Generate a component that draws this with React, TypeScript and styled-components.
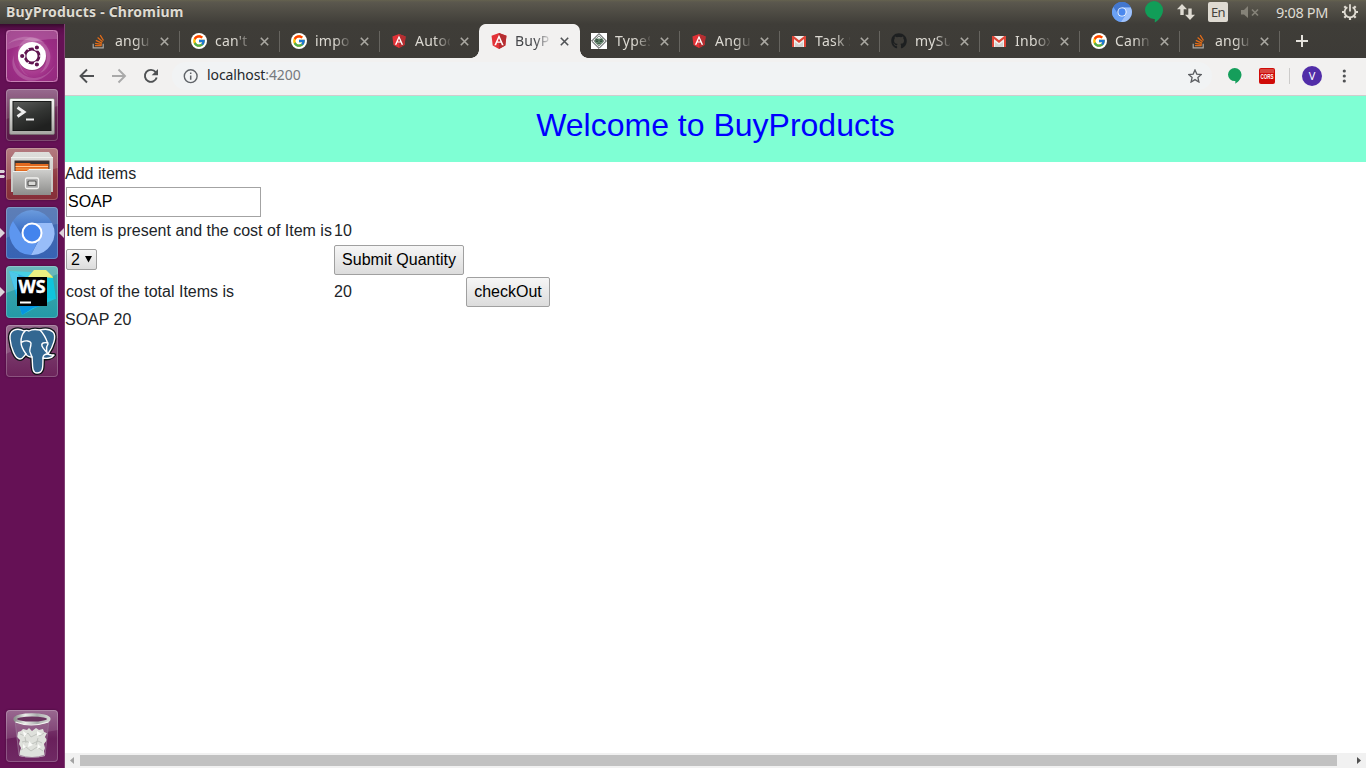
import React from 'react';
import styled, { createGlobalStyle, css } from 'styled-components';
import { FcGoogle } from 'react-icons/fc';
import { FaGithub } from 'react-icons/fa';

const uiFont = css`font-family: 'Noto Sans', 'Open Sans', sans-serif;`;

const GlobalStyle = createGlobalStyle`
  * { box-sizing: border-box; }
  body { margin: 0; background: #fff; overflow: hidden; }
  svg { display: block; flex: none; }
`;

const Desktop = styled.div`
  width: 1366px;
  height: 768px;
  display: flex;
  flex-direction: column;
  overflow: hidden;
`;

const TopPanel = styled.header`
  ${uiFont}
  height: 24px;
  flex: none;
  display: flex;
  align-items: center;
  justify-content: space-between;
  padding: 0 8px 0 6px;
  color: #dfdbd2;
  background: linear-gradient(#65624f 0, #5b584e 2px, #3f3d38 100%);
`;

const WindowTitle = styled.div`
  font-size: 14px;
  font-weight: 700;
  line-height: 24px;
  letter-spacing: 0.2px;
  white-space: nowrap;
  text-shadow: 0 -1px 0 #33312d;
`;

const Indicators = styled.div`
  display: flex;
  align-items: center;
  height: 24px;
`;

const Slot = styled.div<{ $w: number }>`
  width: ${(p) => p.$w}px;
  display: flex;
  flex: none;
  align-items: center;
`;

const KeyboardLayout = styled.div`
  width: 20px;
  height: 20px;
  border-radius: 2px;
  background: #dfdbd2;
  color: #45433d;
  font-size: 13px;
  line-height: 21px;
  text-align: center;
  letter-spacing: -0.6px;
`;

const Clock = styled.div`
  width: 66px;
  font-size: 14.5px;
  line-height: 22px;
  padding-bottom: 1px;
  letter-spacing: -0.35px;
  white-space: nowrap;
`;

const Workspace = styled.div`
  display: flex;
  flex: 1;
  min-height: 0;
`;

const Launcher = styled.nav`
  width: 65px;
  flex: none;
  display: flex;
  flex-direction: column;
  gap: 7px;
  padding: 6px 0 6px;
  border-right: 1px solid #804073;
  background: linear-gradient(#380a2e 0, #5b0e4c 5px, #651155 12px, #651155 100%);
`;

const LauncherRow = styled.div<{ $last?: boolean }>`
  display: flex;
  align-items: center;
  height: 52px;
  flex: none;
  ${(p) => p.$last && 'margin-top: auto;'}
`;

const Marker = styled.div`
  width: 6px;
  flex: none;
`;

const Tile = styled.div<{ $bg: string }>`
  width: 52px;
  height: 52px;
  flex: none;
  border-radius: 4px;
  overflow: hidden;
  background: ${(p) => p.$bg};
  box-shadow: inset 0 0 0 1px rgba(255, 255, 255, 0.22), 0 0 2px rgba(30, 0, 25, 0.5);
`;

const Browser = styled.main`
  flex: 1;
  min-width: 0;
  display: flex;
  flex-direction: column;
`;

const TabStrip = styled.div`
  ${uiFont}
  height: 34px;
  flex: none;
  display: flex;
  padding-left: 15px;
  background: linear-gradient(#3f3d38, #3d3b37);
`;

const TabItem = styled.div<{ $active?: boolean; $divider?: boolean }>`
  position: relative;
  width: 100px;
  height: 34px;
  flex: none;
  display: flex;
  align-items: center;
  padding-left: 11px;
  color: ${(p) => (p.$active ? '#45474a' : '#dcd9d2')};
  ${(p) =>
    p.$active &&
    css`
      background: #f2f1f0;
      border-radius: 7px 7px 0 0;
      box-shadow: -1px 0 0 #f2f1f0;
      &::before,
      &::after {
        content: '';
        position: absolute;
        bottom: 0;
        width: 8px;
        height: 8px;
      }
      &::before {
        left: -9px;
        background: radial-gradient(circle at 0 0, transparent 7.5px, #f2f1f0 8px);
      }
      &::after {
        right: -8px;
        background: radial-gradient(circle at 100% 0, transparent 7.5px, #f2f1f0 8px);
      }
    `}
  ${(p) =>
    p.$divider &&
    css`
      background: linear-gradient(#66645f, #66645f) 99px 7px / 1px 21px no-repeat;
    `}
`;

const TabTitle = styled.div`
  width: 35px;
  margin-left: 8px;
  overflow: hidden;
  white-space: nowrap;
  font-size: 14px;
  letter-spacing: 0.25px;
  line-height: 34px;
  mask-image: linear-gradient(90deg, #000 20px, transparent 37px);
`;

const CloseButton = styled.div`
  margin-left: 9.5px;
`;

const NewTab = styled.div`
  display: flex;
  align-items: center;
  padding-left: 16px;
`;

const Toolbar = styled.div`
  ${uiFont}
  height: 38px;
  flex: none;
  display: flex;
  align-items: center;
  padding: 0 13px 1px 13px;
  background: #f2f1f0;
  border-bottom: 1px solid #cfcecd;
`;

const AddressBar = styled.div`
  width: 1040px;
  height: 28px;
  margin-left: 11px;
  padding: 0 10px 0 11px;
  border-radius: 14px;
  background: #f1f3f4;
  display: flex;
  align-items: center;
  justify-content: space-between;
`;

const Address = styled.div`
  display: flex;
  align-items: center;
  gap: 9px;
  font-size: 14px;
  line-height: 18px;
  letter-spacing: -0.1px;
  color: #25282b;
`;

const Url = styled.span`
  padding-bottom: 2px;
`;

const Port = styled.span`
  color: #75797d;
`;

const Avatar = styled.div`
  width: 20px;
  height: 20px;
  border-radius: 50%;
  background: #512da8;
  color: #fff;
  font-size: 11px;
  line-height: 20px;
  text-align: center;
`;

const Page = styled.div`
  flex: 1;
  min-height: 0;
  background: #fff;
  color: #212529;
  font: 16px/24px 'Liberation Sans', Arial, sans-serif;
`;

const Banner = styled.div`
  height: 66px;
  padding-top: 10px;
  background: #7fffd4;
  color: #0000ff;
  font-size: 32px;
  line-height: 38px;
  text-align: center;
`;

const Line = styled.div`
  height: 24px;
`;

const OrderForm = styled.div`
  display: grid;
  grid-template-columns: 266px 130px 84px;
  grid-template-rows: 30px 24px 30px 30px;
  column-gap: 2px;
  row-gap: 2px;
  align-items: center;
  padding: 1px 1px;
  white-space: nowrap;
`;

const Cell = styled.div<{ $wide?: boolean }>`
  ${(p) => p.$wide && 'grid-column: 1 / -1;'}
`;

const ItemInput = styled.input`
  display: block;
  width: 195px;
  height: 30px;
  padding: 1px;
  border: 1px solid #a3a3a3;
  border-radius: 0;
  background: #fff;
  color: #000;
  font: 16px 'Liberation Sans', Arial, sans-serif;
  outline: none;
`;

const buttonFace = css`
  border: 1px solid #a0a0a0;
  border-radius: 2px;
  background: linear-gradient(#f6f6f6, #dcdcdc);
  color: #000;
  font: 16px 'Liberation Sans', Arial, sans-serif;
`;

const PushButton = styled.button`
  ${buttonFace}
  display: block;
  width: 100%;
  height: 30px;
  padding: 0;
`;

const QuantitySelect = styled.div`
  ${buttonFace}
  display: flex;
  align-items: center;
  width: 31px;
  height: 21px;
  margin-bottom: 1px;
  padding-left: 4px;
  gap: 5px;
  line-height: 19px;
`;

const ScrollBar = styled.div`
  height: 15px;
  flex: none;
  display: flex;
  align-items: center;
  background: #f1f1f1;
`;

const Thumb = styled.div`
  width: 1257px;
  height: 11px;
  background: #c1c1c1;
`;

const StackIcon = () => (
  <svg width="16" height="16" viewBox="0 0 16 16" fill="none">
    <path d="M2.2 10.8v4.1h10v-4.1" stroke="#aaa9a5" strokeWidth="1.2" />
    <path d="M4 12.7h6.7M4.1 10.3l6.7 1M4.8 7.4l6.2 2.7M6.6 4.5l5 4.2M9.2 2.1l3.3 5.4" stroke="#e36c18" strokeWidth="1.25" />
  </svg>
);

const GoogleIcon = () => (
  <svg width="16" height="16" viewBox="0 0 16 16">
    <circle cx="8" cy="8" r="8" fill="#fff" />
    <FcGoogle x="1" y="1" width="14" height="14" size={14} />
  </svg>
);

const AngularIcon = ({ big = false }: { big?: boolean }) => (
  <svg width="16" height="16" viewBox={big ? '0.5 0.5 15 15' : '-0.5 -0.5 17 17'}>
    <path d="M8 .6l7 2.5-1.1 9.1L8 15.5l-5.9-3.3L1 3.1z" fill="#e23237" />
    <path d="M8 .6l7 2.5-1.1 9.1L8 15.5z" fill="#b52e31" />
    <path d="M8 2.2l-4.4 9.7h1.7l.9-2.2h3.6l.9 2.2h1.7zm0 3.2l1.3 3H6.7z" fill="#fff" />
  </svg>
);

const TypeIcon = () => (
  <svg width="16" height="16" viewBox="0 0 16 16" fill="none">
    <path fill="#fff" d="M0 0h16v16H0z" />
    <path d="M8 .6L15.4 8 8 15.4.6 8z" stroke="#34383a" strokeWidth="1" />
    <path d="M8 2.800L13.200 8 8 13.200 2.800 8z" stroke="#455149" strokeWidth=".8" />
    <path d="M4 5.500h8v4L8 12 4 9.500z" fill="#6c9075" />
    <path d="M5 6.700h2v1.800H5zM9 6.700h2v1.800H9zM6.500 10.200h3" stroke="#2c4034" strokeWidth=".8" />
  </svg>
);

const GmailIcon = () => (
  <svg width="16" height="16" viewBox="0 0 16 16">
    <path fill="#efefed" d="M1 3h14v11H1z" />
    <path fill="#d2d2d0" d="M4 9l4 2.7L12 9v5H4z" />
    <path fill="#dd4537" d="M1 3h1.7L8 7.2 13.3 3H15v11h-2V6.1l-5 4-5-4V14H1z" />
  </svg>
);

const GithubIcon = () => <FaGithub size={16} color="#1d1f20" />;

const Cross = ({ dark }: { dark?: boolean }) => (
  <svg width="9" height="9" viewBox="0 0 9 9">
    <path d="M.8.8l7.4 7.4M8.2.8L.8 8.2" stroke={dark ? '#515356' : '#aaa8a2'} strokeWidth="1.6" />
  </svg>
);

const ChromiumMark = ({ size }: { size: number }) => (
  <svg width={size} height={size} viewBox="0 0 44 44">
    <circle cx="22" cy="22" r="22" fill="#5a92ee" />
    <path d="M2.8 11.2A22 22 0 0 1 41.2 11.4L22 12 12.5 27z" fill="#4377cf" />
    <path d="M2.8 11.2A22 22 0 0 0 19.5 43.9L29 28l-7 4-9-6z" fill="#6aa1f5" />
    <path d="M22 12h19.3A22 22 0 0 1 19.5 43.9L31 27z" fill="#9fc2fb" />
    <circle cx="22" cy="22" r="10" fill="#fff" />
    <circle cx="22" cy="22" r="8" fill="#4a88ee" />
  </svg>
);

const HangoutsMark = ({ w, h, color }: { w: number; h: number; color: string }) => (
  <svg width={w} height={h} viewBox="0 0 18 22" preserveAspectRatio="none">
    <path d="M9 0a9 9 0 0 1 9 9c0 5.3-3.8 9.8-8.2 12.6V18H9A9 9 0 0 1 9 0z" fill={color} />
  </svg>
);

const NetworkIcon = () => (
  <svg width="18" height="16" viewBox="0 0 18 16" fill="#dfdbd2">
    <path d="M5 0l5 5.2H6.7V11H3.3V5.2H0zM13 16l5-5.2h-3.3V4.5h-3.4v6.3H8z" />
  </svg>
);

const VolumeIcon = () => (
  <svg width="18" height="12" viewBox="0 0 18 12">
    <path d="M0 4h3l4-4v12L3 8.5H0z" fill="#858278" />
    <path d="M11 3.5l6 6M17 3.5l-6 6" stroke="#858278" strokeWidth="1.7" />
  </svg>
);

const PowerIcon = () => (
  <svg width="16" height="16" viewBox="0 0 16 16" fill="none" stroke="#dfdbd2">
    <path d="M5.4 3.2a5.4 5.4 0 1 0 5.2 0" strokeWidth="1.8" />
    <path d="M8 .2v7.3" strokeWidth="1.8" />
    <path d="M2.3 2.3l2 2M13.7 2.3l-2 2M0 8h2.5M13.5 8H16M2.3 13.7l2-2M13.7 13.7l-2-2M8 13.2V16" strokeWidth="2.2" />
  </svg>
);

const CorsBadge = () => (
  <svg width="16" height="16" viewBox="0 0 16 16">
    <rect width="16" height="16" rx="2" fill="#d00b08" />
    <path d="M1 2q0-1 1-1h12q1 0 1 1v3H1z" fill="#d8463f" />
    <text x="1.500" y="10.800" fill="#fff" fontFamily="Liberation Sans, sans-serif" fontSize="8" fontWeight="700" textLength="13" lengthAdjust="spacingAndGlyphs">CORS</text>
  </svg>
);

const UbuntuTile = () => (
  <svg width="52" height="52" viewBox="0 0 52 52">
    <defs>
      <radialGradient id="dash" cx=".5" cy=".55" r=".7">
        <stop offset="0" stopColor="#c45aa6" />
        <stop offset=".6" stopColor="#9b2c84" />
        <stop offset="1" stopColor="#912a7c" />
      </radialGradient>
    </defs>
    <path fill="url(#dash)" d="M0 0h52v52H0z" />
    <path d="M2 14C14 2 39 5 44 23c2 10-4 18-10 20 10-9 8-23-2-29C24 9 12 8 2 14z" fill="#fff" opacity=".18" />
    <path d="M8 25c-2 13 10 24 21 23 9-1 14-5 20-13-8 16-28 22-39 8C5 37 6 30 8 25z" fill="#fff" opacity=".17" />
    <path d="M12 24C11 8 28 2 39 13 26 8 18 14 14 29c0 8 3 14 9 17-7-2-11-10-11-22z" fill="#fff" opacity=".15" />
    <path d="M0 0h52v9C34 8 16 15 0 20z" fill="#fff" opacity=".16" />
    <rect x=".5" y=".5" width="51" height="51" rx="4" fill="none" stroke="#c881b5" />
    <circle cx="26.500" cy="27" r="14" fill="#6c205b" opacity=".4" />
    <circle cx="26" cy="26" r="14" fill="#fff" />
    <circle cx="26" cy="26" r="7" fill="none" stroke="#601450" strokeWidth="2.900" />
    <g fill="#601450" stroke="#fff" strokeWidth="1.200">
      <circle cx="16.200" cy="26" r="2.700" />
      <circle cx="30.900" cy="17.500" r="2.700" />
      <circle cx="30.900" cy="34.500" r="2.700" />
    </g>
    <path d="M33 26h3M22.500 20L20.500 16.500M22.500 32l-2 3.500" stroke="#fff" strokeWidth="1.200" />
  </svg>
);

const TerminalTile = () => (
  <svg width="52" height="52" viewBox="0 0 52 52">
    <defs>
      <linearGradient id="screen" x2=".5" y2="1"><stop stopColor="#5c5d5b" /><stop offset=".55" stopColor="#343634" /><stop offset="1" stopColor="#202120" /></linearGradient>
      <linearGradient id="frame" x2="0" y2="1"><stop stopColor="#f7f7f5" /><stop offset="1" stopColor="#a6a6a2" /></linearGradient>
    </defs>
    <path d="M0 0h52v17L0 30z" fill="#fff" opacity=".12" />
    <rect x="3.500" y="9.500" width="45" height="36" rx="1.500" fill="url(#frame)" stroke="#74706f" strokeWidth=".6" />
    <rect x="7" y="12.500" width="38" height="29" fill="url(#screen)" stroke="#191a19" />
    <path d="M11.500 18.500l6.500 4.500-6.500 4.500" fill="none" stroke="#eee" strokeWidth="2.900" />
    <path d="M20 30.500h8" stroke="#eee" strokeWidth="2.200" />
  </svg>
);

const FilesTile = () => (
  <svg width="52" height="52" viewBox="0 0 52 52">
    <defs>
      <linearGradient id="cab" x2="0" y2="1"><stop stopColor="#cfcfcd" /><stop offset="1" stopColor="#8d8d8b" /></linearGradient>
      <linearGradient id="lid" x2="0" y2="1"><stop stopColor="#dededb" /><stop offset="1" stopColor="#c4c4c1" /></linearGradient>
    </defs>
    <path d="M0 0h52v20L0 32z" fill="#fff" opacity=".16" />
    <path d="M9 4h34l4 6v34H5V10z" fill="url(#lid)" />
    <path d="M5 9.500h42" stroke="#efefec" strokeWidth="1" />
    <path d="M8.500 12.500h35v11h-35z" fill="#393331" />
    <path d="M9.500 15h14l1.500 1h17.500v7h-33z" fill="#e26a20" />
    <path d="M9.500 18.500H42" stroke="#ffd09a" strokeWidth="1.100" />
    <path d="M9.500 21H42" stroke="#f9a54e" strokeWidth="1.200" />
    <path d="M7 23.500h14l2-2h22V47H7z" fill="url(#cab)" />
    <path d="M7 23.500h14l2-2h22" stroke="#f0f0ee" fill="none" />
    <rect x="19.500" y="30" width="13" height="10.500" rx="1.500" fill="#aaa" stroke="#f2f2f0" strokeWidth="1.300" />
    <rect x="22" y="33" width="8" height="4.500" rx="1" fill="#d9d9d7" stroke="#595957" strokeWidth="1.200" />
  </svg>
);

const ChromiumTile = () => (
  <svg width="52" height="52" viewBox="0 0 52 52">
    <defs>
      <linearGradient id="ctop" x2="0" y2="1"><stop stopColor="#6b9bdd" /><stop offset="1" stopColor="#3367c0" /></linearGradient>
    </defs>
    <path d="M0 0h52v17Q24 20 0 31z" fill="#fff" opacity=".12" />
    <path d="M7 14A22 22 0 0 1 46 16H26L16 28z" fill="url(#ctop)" />
    <path d="M7 14A22 22 0 0 0 25 48l7-14-8 1-9-8z" fill="#5d96ef" />
    <path d="M26 16h20A22 22 0 0 1 25 48l10-19z" fill="#98bdf9" />
    <circle cx="26" cy="26" r="10.500" fill="#fff" />
    <circle cx="26" cy="26" r="8.500" fill="#4384ed" />
  </svg>
);

const WebStormTile = () => (
  <svg width="52" height="52" viewBox="0 0 52 52">
    <path d="M3 5l22 1 21 7 3 20-20 9-13 7z" fill="#18c5dc" />
    <path d="M22 11L28 4h12l7 7-5 13-18-5z" fill="#e6ee62" />
    <path d="M3 5l17 6 15 12 6 15-14 4-11 7z" fill="#0795df" />
    <path d="M3 5l9 3 4 14-5 8z" fill="#22b9e4" />
    <path d="M38 11l9 1 3 21-14-2z" fill="#10c4dc" />
    <path d="M0 0h52v8L0 27z" fill="#fff" opacity=".2" />
    <path fill="#000" d="M11 11h30v29H11z" />
    <path d="M14 36.500h11" stroke="#fff" strokeWidth="2" />
    <text x="12.500" y="27" fill="#fff" stroke="#fff" strokeWidth=".4" fontFamily="Open Sans, sans-serif" fontSize="17.500" fontWeight="700" textLength="27" lengthAdjust="spacingAndGlyphs">WS</text>
  </svg>
);

const elephantOutline =
  'M18 6C11 2 3 5 4 14c1 9 5 20 10 20 3 0 4-3 6-5 1 2 3 3 6 3 1 6-1 16 5 16 6 0 6-5 6-15 4 1 9 0 11-3-3 0-5 0-6-1 5-7 9-18 5-22-4-4-9-3-13-2-5-1-8-1-11 1-2-1-3-1-5 0z';

const PostgresTile = () => (
  <svg width="52" height="52" viewBox="0 0 52 52" strokeLinejoin="round" strokeLinecap="round">
    <path d="M0 0h52v13Q25 15 0 29z" fill="#fff" opacity=".15" />
    <path d={elephantOutline} stroke="#101318" strokeWidth="4" fill="#336791" />
    <g stroke="#fff" strokeWidth="1.400" fill="#336791">
      <path d={elephantOutline} />
      <path d="M19 6c-4 4-4 8-4 11 0 5 2 8 5 12M16 17c4-2 8-1 9 1 0 5-2 6-1 9 1 2 1 3 2 5M34 5c5 5 7 11 8 14-3 4-1 6-1 9M42 18c-4-1-7 0-6 3 1 3 4 5 6 8-3 0-5 1-5 4" fill="none" />
    </g>
  </svg>
);

const TrashTile = () => (
  <svg width="52" height="52" viewBox="0 0 52 52">
    <defs>
      <linearGradient id="rim"><stop stopColor="#8f928f" /><stop offset=".3" stopColor="#eceeeb" /><stop offset=".65" stopColor="#aaaead" /><stop offset="1" stopColor="#d4d6d3" /></linearGradient>
    </defs>
    <path d="M0 0h52v20L0 29z" fill="#fff" opacity=".12" />
    <path d="M9 10h34l-4 35q-13 5-26 0z" fill="#ddd" opacity=".12" />
    <path d="M12 22l3-1 2-2 4 1 2-2 3 3 4-3 3 2 4-1 1 3 3 1-2 4 2 3-3 4 1 4-1 3 1 5q-12 3-26 0l1-5 1-3-2-4 1-4-3-3z" fill="#dfe1dc" />
    <path d="M14 24l5 2 3-3 3 4 6-3 3 2 4-3M16 32l4-1 6 3 6-3 4 2M15 40l5-3 5 4 6-4 6 4M19 27l1 6M32 28l-2 7" fill="none" stroke="#bcbfba" strokeWidth=".9" />
    <path d="M17 21l4 3-3 3zM31 21l5 3-5 2zM23 31l4 4-5 2zM32 34l3 3-4 2zM17 34l3 3-3 2z" fill="#fafbf8" />
    <path d="M9 10l4 35q13 5 26 0l4-35" fill="none" stroke="#987394" strokeWidth=".8" />
    <ellipse cx="26" cy="9" rx="17" ry="4.200" fill="#6a325e" stroke="url(#rim)" strokeWidth="3.200" />
    <path d="M9.500 12q15 6 33 0" stroke="#f2f3f0" strokeWidth="1.200" fill="none" />
  </svg>
);

type AppTile = { name: string; bg: string; icon: React.ReactNode; running?: 1 | 2; focused?: boolean };

const launcherApps: AppTile[] = [
  { name: 'dash', bg: '#9b2c84', icon: <UbuntuTile /> },
  { name: 'terminal', bg: 'linear-gradient(#8a5680,#64264f 50%,#5a1949)', icon: <TerminalTile /> },
  { name: 'files', bg: 'linear-gradient(#a56268,#8e383f 60%,#852e39)', icon: <FilesTile />, running: 2 },
  { name: 'chromium', bg: 'linear-gradient(#476cad,#3763b4)', icon: <ChromiumTile />, running: 1, focused: true },
  { name: 'webstorm', bg: 'linear-gradient(#47a7aa,#239aa7)', icon: <WebStormTile />, running: 1 },
  { name: 'postgres', bg: 'linear-gradient(#855079,#6c235b)', icon: <PostgresTile /> },
];

const tabs: { title: string; icon: React.ReactNode; active?: boolean }[] = [
  { title: 'angular', icon: <StackIcon /> },
  { title: "can't bind", icon: <GoogleIcon /> },
  { title: 'import', icon: <GoogleIcon /> },
  { title: 'Autoc', icon: <AngularIcon /> },
  { title: 'BuyPr', icon: <AngularIcon big />, active: true },
  { title: 'TypeS', icon: <TypeIcon /> },
  { title: 'Angul', icon: <AngularIcon /> },
  { title: 'Task S', icon: <GmailIcon /> },
  { title: 'mySu', icon: <GithubIcon /> },
  { title: 'Inbox', icon: <GmailIcon /> },
  { title: 'Canno', icon: <GoogleIcon /> },
  { title: 'angul', icon: <StackIcon /> },
];

const RunningMarks = ({ count }: { count?: 1 | 2 }) => (
  <Marker>
    {count === 1 && <svg width="5" height="10" viewBox="0 0 5 10"><path d="M0 0l5 5-5 5z" fill="#dcd3da" /></svg>}
    {count === 2 && <svg width="5" height="8" viewBox="0 0 5 8"><path d="M0 0h4l1 1.500-1 1.500H0zM0 5h4l1 1.500L4 8H0z" fill="#dcd3da" /></svg>}
  </Marker>
);

export default function App() {
  return (
    <Desktop>
      <GlobalStyle />
      <TopPanel>
        <WindowTitle>BuyProducts - Chromium</WindowTitle>
        <Indicators>
          <Slot $w={33}><ChromiumMark size={20} /></Slot>
          <Slot $w={32}><HangoutsMark w={18} h={22} color="#119d58" /></Slot>
          <Slot $w={31}><NetworkIcon /></Slot>
          <Slot $w={33}><KeyboardLayout>En</KeyboardLayout></Slot>
          <Slot $w={35}><VolumeIcon /></Slot>
          <Clock>9:08 PM</Clock>
          <PowerIcon />
        </Indicators>
      </TopPanel>
      <Workspace>
        <Launcher>
          {launcherApps.map((app) => (
            <LauncherRow key={app.name}>
              <RunningMarks count={app.running} />
              <Tile $bg={app.bg}>{app.icon}</Tile>
              {app.focused && <svg width="6" height="10" viewBox="0 0 6 10"><path d="M6 0L1 5l5 5z" fill="#dcd3da" /></svg>}
            </LauncherRow>
          ))}
          <LauncherRow $last>
            <Marker />
            <Tile $bg="linear-gradient(#8c5482,#69205b 55%,#702a64)"><TrashTile /></Tile>
          </LauncherRow>
        </Launcher>
        <Browser>
          <TabStrip>
            {tabs.map((tab, i) => (
              <TabItem key={i} $active={tab.active} $divider={i !== 3 && i !== 4}>
                {tab.icon}
                <TabTitle>{tab.title}</TabTitle>
                <CloseButton><Cross dark={tab.active} /></CloseButton>
              </TabItem>
            ))}
            <NewTab>
              <svg width="12" height="12" viewBox="0 0 12 12"><path d="M6 0v12M0 6h12" stroke="#e5e2dc" strokeWidth="2" /></svg>
            </NewTab>
          </TabStrip>
          <Toolbar>
            <Slot $w={33}>
              <svg width="18" height="16" viewBox="0 0 18 16" fill="none" stroke="#4f5153" strokeWidth="1.900"><path d="M16 8H2.800M9 1.500L2.500 8 9 14.500" /></svg>
            </Slot>
            <Slot $w={32}>
              <svg width="16" height="16" viewBox="0 0 16 16" fill="none" stroke="#a9a9a9" strokeWidth="1.900"><path d="M1 8h12.500M7.500 1.500L14 8l-6.500 6.500" /></svg>
            </Slot>
            <Slot $w={18}>
              <svg width="16" height="16" viewBox="0 0 16 16"><path d="M13.700 9.500A6 6 0 1 1 12.700 4.200" fill="none" stroke="#4f5153" strokeWidth="1.900" /><path d="M15 1v6.300H8.700z" fill="#4f5153" /></svg>
            </Slot>
            <AddressBar>
              <Address>
                <svg width="15" height="15" viewBox="0 0 15 15"><circle cx="7.700" cy="7.200" r="6.400" fill="none" stroke="#5f6368" strokeWidth="1.400" /><path d="M7.700 6.400v4.400M7.700 3.400v1.600" stroke="#5f6368" strokeWidth="1.500" /></svg>
                <Url>localhost<Port>:4200</Port></Url>
              </Address>
              <svg width="14" height="14" viewBox="0 0 14 14"><path d="M7 .9l1.800 4.200 4.500.4-3.400 3 1 4.500L7 10.600 3.100 13l1-4.500-3.400-3 4.500-.4z" fill="none" stroke="#5b5e62" strokeWidth="1.300" /></svg>
            </AddressBar>
            <Slot $w={47}><Slot $w={16} /><HangoutsMark w={13.5} h={16} color="#159e5b" /></Slot>
            <Slot $w={30}><CorsBadge /></Slot>
            <Slot $w={13}><svg width="1" height="16"><path fill="#cccbca" d="M0 0h1v16H0z" /></svg></Slot>
            <Slot $w={40}><Avatar>V</Avatar></Slot>
            <svg width="4" height="14" viewBox="0 0 4 14" fill="#505254"><circle cx="2.300" cy="2" r="1.600" /><circle cx="2.300" cy="7" r="1.600" /><circle cx="2.300" cy="12" r="1.600" /></svg>
          </Toolbar>
          <Page>
            <Banner>Welcome to BuyProducts</Banner>
            <Line>Add items</Line>
            <OrderForm>
              <Cell $wide><ItemInput defaultValue="SOAP" /></Cell>
              <Cell>Item is present and the cost of Item is</Cell>
              <Cell>10</Cell>
              <Cell />
              <Cell>
                <QuantitySelect>
                  2
                  <svg width="7" height="8" viewBox="0 0 7 8"><path d="M0 0h7L3.500 6.500z" fill="#000" /></svg>
                </QuantitySelect>
              </Cell>
              <Cell><PushButton>Submit Quantity</PushButton></Cell>
              <Cell />
              <Cell>cost of the total Items is</Cell>
              <Cell>20</Cell>
              <Cell><PushButton>checkOut</PushButton></Cell>
            </OrderForm>
            <Line>SOAP 20</Line>
          </Page>
          <ScrollBar>
            <Slot $w={15}><svg width="15" height="15" viewBox="0 0 15 15"><path d="M9 4v7L5 7.500z" fill="#a3a3a3" /></svg></Slot>
            <Thumb />
            <Slot $w={29}><svg width="29" height="15" viewBox="0 0 29 15"><path d="M20 4v7l4-3.500z" fill="#505050" /></svg></Slot>
          </ScrollBar>
        </Browser>
      </Workspace>
    </Desktop>
  );
}
